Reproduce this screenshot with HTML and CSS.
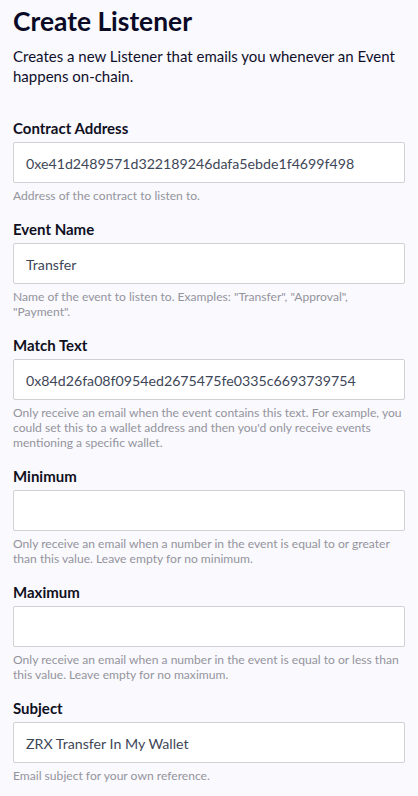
FILE: index.html
```html
<!DOCTYPE html>
<html lang="en">
<head>
<meta charset="utf-8">
<title>Create Listener</title>
<link rel="stylesheet" href="styles.css">
</head>
<body>
<main class="page">
  <h1 class="title">Create Listener</h1>
  <p class="intro">Creates a new Listener that emails you whenever an Event happens on-chain.</p>
  <form class="form">
    <div class="field">
      <label class="label">Contract Address</label>
      <div class="input">0xe41d2489571d322189246dafa5ebde1f4699f498</div>
      <p class="help">Address of the contract to listen to.</p>
    </div>
    <div class="field">
      <label class="label">Event Name</label>
      <div class="input">Transfer</div>
      <p class="help">Name of the event to listen to. Examples: "Transfer", "Approval", "Payment".</p>
    </div>
    <div class="field">
      <label class="label">Match Text</label>
      <div class="input">0x84d26fa08f0954ed2675475fe0335c6693739754</div>
      <p class="help">Only receive an email when the event contains this text. For example, you could set this to a wallet address and then you'd only receive events mentioning a specific wallet.</p>
    </div>
    <div class="field">
      <label class="label">Minimum</label>
      <div class="input"></div>
      <p class="help">Only receive an email when a number in the event is equal to or greater than this value. Leave empty for no minimum.</p>
    </div>
    <div class="field">
      <label class="label">Maximum</label>
      <div class="input"></div>
      <p class="help">Only receive an email when a number in the event is equal to or less than this value. Leave empty for no maximum.</p>
    </div>
    <div class="field">
      <label class="label">Subject</label>
      <div class="input">ZRX Transfer In My Wallet</div>
      <p class="help">Email subject for your own reference.</p>
    </div>
  </form>
</main>
</body>
</html>
```
FILE: styles.css
```css
html, body {
  margin: 0;
  padding: 0;
  background: #f9f9fe;
}
body {
  font-family: Lato, Roboto, sans-serif;
  color: #0b0b24;
}
.page {
  padding: 5.5px 13px 0;
  display: flex;
  flex-direction: column;
}
.title {
  margin: 0;
  font-size: 26.4px;
  line-height: 30px;
  font-weight: 700;
  color: #0a0a26;
}
.intro {
  margin: 10.5px 0 0;
  font-size: 15px;
  line-height: 20.3px;
  color: #10102a;
}
.form {
  display: flex;
  flex-direction: column;
  gap: 16.9px;
  margin-top: 32px;
}
.field {
  display: flex;
  flex-direction: column;
}
.label {
  font-size: 15px;
  line-height: 19px;
  font-weight: 700;
  color: #10101e;
  margin-bottom: 4.6px;
}
.input {
  box-sizing: border-box;
  height: 41px;
  background: #fff;
  border: 1px solid #d0d0d5;
  border-radius: 2px;
  padding: 2px 12px 0;
  display: flex;
  align-items: center;
  font-size: 14.2px;
  color: #3e4758;
}
.help {
  margin: 4.5px 0 0;
  font-size: 12.1px;
  line-height: 15px;
  color: #94949c;
}
```
